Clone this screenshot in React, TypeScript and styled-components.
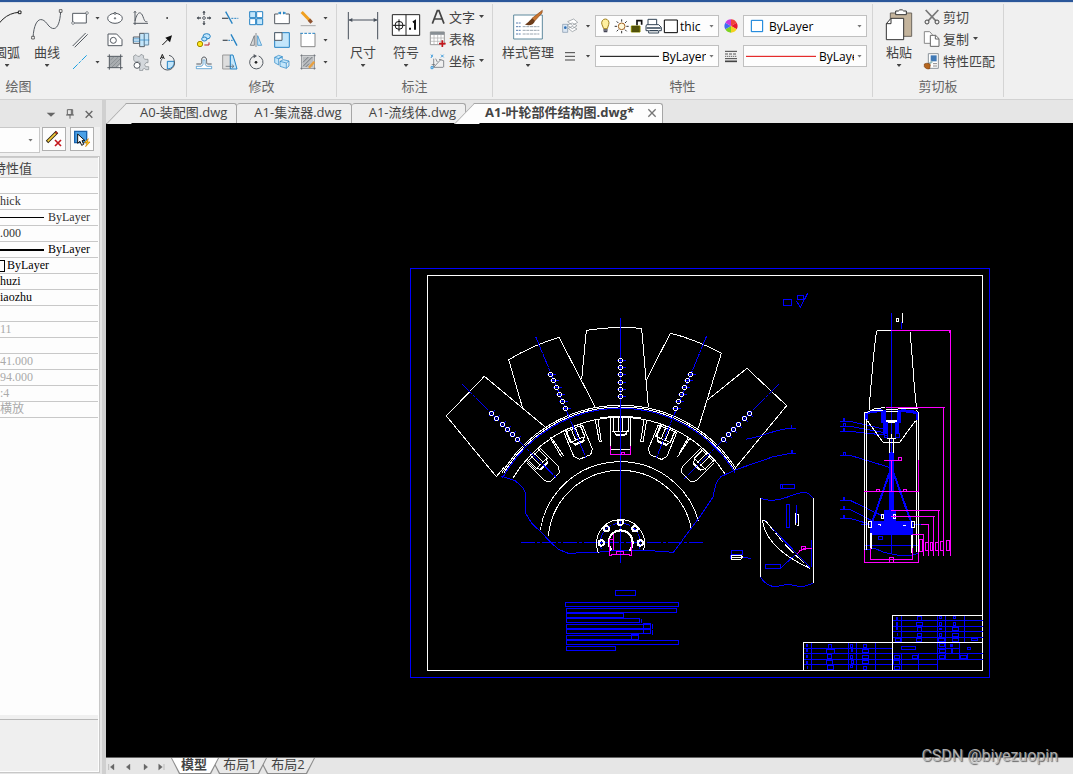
import React, { ReactNode } from "react";
import styled, { createGlobalStyle, css } from "styled-components";

const ui = `"Open Sans", "Noto Sans CJK SC", sans-serif`;

const GlobalStyle = createGlobalStyle`
  * { box-sizing: border-box; }
  html, body, #root { margin: 0; height: 100%; }
  body { font-family: ${ui}; font-size: 13px; color: #444; background: #e6e6e6; overflow: hidden; }
  button, select { font: inherit; color: inherit; }
`;

/* ---------- shell ---------- */
const Shell = styled.div`
  display: flex;
  flex-direction: column;
  height: 100vh;
`;
const Ribbon = styled.header`
  display: flex;
  flex: none;
  overflow: hidden;
  height: 100px;
  padding: 2px 0;
  background: #f0f0f0;
  border-top: 2px solid #2b579a;
  border-bottom: 1px solid #d2d2d2;
  box-shadow: inset 0 1px #d9dee6;
`;
const Body = styled.div`
  display: flex;
  flex: 1;
  min-height: 0;
`;

/* ---------- ribbon parts ---------- */
const Group = styled.section<{ $w: number; $end?: boolean }>`
  display: flex;
  flex-direction: column;
  flex: none;
  width: ${(p) => p.$w}px;
  margin-left: ${(p) => (p.$end ? -149 : 0)}px;
  border-right: 1px solid #d4d4d4;
`;
const Tools = styled.div<{ $end?: boolean }>`
  display: flex;
  height: 72px;
  padding: 2px 6px 0 4px;
  justify-content: ${(p) => (p.$end ? "flex-end" : "flex-start")};
`;
const GroupName = styled.h2`
  margin: 0;
  font-size: 13px;
  font-weight: 400;
  line-height: 20px;
  text-align: center;
  color: #666;
`;
const plain = css`
  padding: 0;
  border: 0;
  background: none;
`;
const BigButton = styled.button<{ $w: number }>`
  ${plain}
  display: flex;
  flex-direction: column;
  flex: none;
  align-items: center;
  width: ${(p) => p.$w}px;
  line-height: 16px;
  white-space: nowrap;
`;
const BigIcon = styled.span`
  display: grid;
  place-items: center;
  height: 38px;
`;
const IconGrid = styled.div<{ $cols: number }>`
  display: grid;
  grid-template-columns: repeat(${(p) => p.$cols}, 26px);
  grid-auto-rows: 22px;
  padding-top: 1px;
`;
const ArrowColumn = styled.div`
  display: grid;
  width: 9px;
  grid-auto-rows: 22px;
  padding-top: 1px;
`;
const IconButton = styled.button`
  ${plain}
  display: grid;
  place-items: center;
`;
const RowList = styled.div`
  display: grid;
  grid-auto-rows: 22px;
  padding-left: 2px;
`;
const RowButton = styled.button`
  ${plain}
  display: flex;
  align-items: center;
  gap: 2px;
  padding-bottom: 1px;
  line-height: 18px;
  white-space: nowrap;
`;
const Arrow = styled.i<{ $color?: string }>`
  display: block;
  width: 5px;
  height: 3px;
  margin: 2px;
  background: ${(p) => p.$color ?? "#444"};
  clip-path: polygon(0 0, 100% 0, 50% 100%);
`;
const MenuArrow = styled(Arrow)`
  margin-top: 4px;
`;
const PropertyGrid = styled.div`
  display: grid;
  grid-template-columns: 22px 14px 124px 24px 124px;
  grid-auto-rows: 22px;
  row-gap: 8px;
  align-items: center;
  justify-items: center;
  padding-top: 9px;
`;
const Combo = styled.label`
  position: relative;
  display: block;
  width: 100%;
  height: 22px;
`;
const ComboSelect = styled.select<{ $indent: number }>`
  appearance: none;
  width: 100%;
  height: 100%;
  padding: 0 12px 0 ${(p) => p.$indent}px;
  border: 1px solid #c0c0c0;
  border-radius: 0;
  background: #fdfdfd;
  color: #000;
  font-size: 12px;
`;
const ComboArt = styled.span`
  position: absolute;
  inset: 0;
  display: flex;
  align-items: center;
  justify-content: space-between;
  padding: 0 3px;
  pointer-events: none;
`;

/* ---------- property palette ---------- */
const Palette = styled.aside`
  display: flex;
  flex-direction: column;
  flex: none;
  width: 106px;
  padding: 0 2px 1px 0;
  background: #e6e6e6;
  border-right: 4px solid #d0d0d0;
`;
const PaletteBar = styled.div`
  display: flex;
  justify-content: flex-end;
  align-items: center;
  gap: 7px;
  height: 27px;
  padding-right: 5px;
`;
const PaletteTools = styled.div`
  display: flex;
  gap: 4px;
  height: 29px;
  padding-right: 6px;
  background: #f0f0f0;
`;
const ObjectSelect = styled.div`
  flex: 1;
  display: flex;
  align-items: center;
  justify-content: flex-end;
  height: 26px;
  padding-right: 4px;
  margin-right: -2px;
  border: solid #c8c8c8;
  border-width: 1px 1px 1px 0;
  background: #fdfdfd;
`;
const FramedButton = styled.button`
  display: grid;
  place-items: center;
  width: 24px;
  height: 24px;
  padding: 0;
  border: 1px solid #b0b0b0;
  background: #fdfdfd;
`;
const Sheet = styled.div`
  display: flex;
  flex-direction: column;
  flex: 1;
  border: solid #c8c8c8;
  border-width: 1px 1px 1px 0;
  background: #fdfdfd;
`;
const ValueTable = styled.table`
  width: 98px;
  border-collapse: collapse;
  table-layout: fixed;
  font-family: "Liberation Serif", "Noto Sans CJK SC", serif;
  font-size: 12px;
`;
const HeadCell = styled.th`
  height: 20px;
  padding: 0;
  border: solid #ccc;
  border-width: 1px 0;
  background: #f0f0f0;
  font-family: ${ui};
  font-size: 13px;
  font-weight: 400;
  line-height: 18px;
  text-align: left;
  text-indent: -7px;
`;
const ValueCell = styled.td<{ $tone?: "dark" | "pale" }>`
  height: 16px;
  padding: 0;
  border-bottom: 1px solid #c8c8c8;
  line-height: 15px;
  white-space: nowrap;
  color: ${(p) => (p.$tone === "dark" ? "#000" : p.$tone === "pale" ? "#aaa" : "#333")};
`;
const CellLine = styled.span`
  display: flex;
  align-items: center;
  height: 15px;
`;
const Rule = styled.i<{ $weight: number }>`
  width: 44px;
  height: ${(p) => p.$weight}px;
  margin-right: 4px;
  background: #000;
`;
const Swatch = styled.i`
  width: 5px;
  height: 12px;
  margin-right: 2px;
  border: 1px solid #000;
  border-left: 0;
`;
const HelpBox = styled.div`
  height: 56px;
  margin: auto 1px 1px 0;
  border-top: 4px solid #f0f0f0;
  background: #efefef;
  box-shadow: inset 0 1px #b8b8b8;
`;

/* ---------- document area ---------- */
const Workspace = styled.main`
  position: relative;
  display: flex;
  flex-direction: column;
  flex: 1;
  min-width: 0;
`;
const FileTabs = styled.nav`
  display: flex;
  flex: none;
  height: 23px;
  padding-top: 3px;
  background: #e6e6e6;
`;
const FileTab = styled.button<{ $slant?: boolean; $active?: boolean }>`
  position: relative;
  z-index: 0;
  height: 20px;
  padding: 0 ${(p) => (p.$active ? 6 : 10)}px 2px ${(p) => (p.$active ? 31 : p.$slant ? 34 : 17)}px;
  margin-left: ${(p) => (p.$active ? -12 : 0)}px;
  border: 0;
  background: none;
  font-weight: ${(p) => (p.$active ? 700 : 400)};
  line-height: 16px;
  white-space: nowrap;
  &::before {
    content: "";
    position: absolute;
    z-index: -1;
    inset: 0 0 0 ${(p) => (p.$slant ? 19 : 0)}px;
    border: solid #a6a6a6;
    border-width: 1px 1px 0 0;
    border-radius: 3px 3px 0 0;
    background: ${(p) => (p.$active ? "#fdfdfd" : "#efefef")};
  }
  &::after {
    content: "";
    display: ${(p) => (p.$slant ? "block" : "none")};
    position: absolute;
    z-index: -1;
    left: 0;
    top: 0;
    width: 24px;
    height: 20px;
    border: solid #a6a6a6;
    border-width: 1px 0 0 1px;
    background: ${(p) => (p.$active ? "#fdfdfd" : "#efefef")};
    transform: skewX(-44deg);
    transform-origin: 0 100%;
  }
`;
const CloseMark = styled.span`
  display: inline-block;
  margin-left: 13px;
  vertical-align: -1px;
`;
const Canvas = styled.div`
  flex: 1;
  min-height: 0;
  background: #000;
`;
const Sketch = styled.svg`
  display: block;
  width: 100%;
  height: 100%;
  fill: none;
  shape-rendering: crispEdges;
  & * { vector-effect: non-scaling-stroke; }
`;
const LayoutBar = styled.nav`
  display: flex;
  flex: none;
  height: 17px;
  border-top: 1px solid #666;
  background: #e6e6e6;
`;
const Pager = styled.div`
  display: flex;
  gap: 4px;
  width: 73px;
`;
const LayoutTab = styled.button<{ $order: number; $active?: boolean }>`
  position: relative;
  z-index: ${(p) => 4 - p.$order};
  height: 16px;
  width: ${(p) => (p.$active ? 48 : 56)}px;
  margin-left: -8px;
  padding: ${(p) => (p.$active ? "0 2px 3px 0" : "0 0 3px 2px")};
  border: 0;
  background: #8c8c8c;
  clip-path: polygon(0 0, 100% 0, calc(100% - 8px) 100%, 8px 100%);
  font-weight: ${(p) => (p.$active ? 700 : 400)};
  line-height: 13px;
  &::before {
    content: "";
    position: absolute;
    z-index: -1;
    inset: 0 1px 1px;
    background: ${(p) => (p.$active ? "#fff" : "#e9e9e9")};
    clip-path: polygon(0 0, 100% 0, calc(100% - 8px) 100%, 8px 100%);
  }
`;
const Watermark = styled.span`
  position: absolute;
  z-index: 9;
  right: 15px;
  bottom: 8px;
  font: 16px/20px "Roboto", "Liberation Sans", sans-serif;
  color: rgba(190, 190, 190, 0.9);
  text-shadow: 1px 1px 1px #666;
`;

/* ---------- icons: every unit is a third of a pixel ---------- */
const IconSvg = styled.svg`
  display: block;
  flex: none;
  fill: none;
  stroke: #555b62;
  stroke-width: 3;
`;
const Icon = ({ w = 18, h = 18, children }: { w?: number; h?: number; children: ReactNode }) => (
  <IconSvg width={w} height={h} viewBox={`0 0 ${w * 3} ${h * 3}`} aria-hidden="true">
    {children}
  </IconSvg>
);

const blue = "#2583c4";
const sky = "#c3e6fb";

const drawTools: [string, ReactNode][] = [
  ["椭圆", <><ellipse cx="27" cy="28" rx="22" ry="15" fill="#fff" /><circle cx="27" cy="13" r="3" fill="#fff" /><circle cx="27" cy="28" r="2" /></>],
  ["函数曲线", <><path d="M9 7V48M4 43H48M9 36C16 6 27 6 33 23S40 38 46 38" /><path d="M5 12l4-6 4 6" strokeWidth="2" /></>],
  ["点", <path d="M25 27h5" stroke="#222" strokeWidth="5" />],
  ["孔", <><path d="M6 9H32L48 26V44H6z" fill="#fff" /><circle cx="22" cy="28" r="9" /></>],
  ["轴", <><path d="M4 18H23V37H4z" fill="#fff" /><path d="M23 7H37V47H23z" fill={sky} /><path d="M37 7H50V42H37z" fill={sky} stroke="#6b8da5" /><path d="M2 27h50M4 22h19M4 32h19" stroke={blue} strokeWidth="2" /></>],
  ["箭头", <><path d="M13 42L30 25" stroke="#111" /><path d="M42 13L36 34 22 20z" fill="#111" stroke="none" /></>],
  ["填充", <><path d="M10 10H44V34L34 44H10z" fill="#a9adb0" stroke="none" /><path d="M10 4V50M44 4V50M4 10H50M4 44H50" /><path d="M13 22L24 11M13 35L37 12M18 42L42 18M30 42L42 30" stroke="#7f858a" strokeWidth="2" /></>],
  ["齿轮", <><path d="M5 9l7-4 5 5h6l4-6 8 4-1 7 5 4h9v10h-6l-4 6 3 6h9v9h-9l-3-4-6 3v4h-9v-8l-4-6 6-4v-6l-5-4-10 2-5-6z" fill="#d4d8dc" stroke="#80868b" strokeWidth="2" /><circle cx="15" cy="37" r="9" fill="#fff" /></>],
  ["局部放大", <><path d="M28 25H49A21 21 0 0 1 28 48z" fill={sky} stroke={blue} /><path d="M18 12A21 21 0 1 0 49 25A21 21 0 0 0 33 7" /><path d="M7 18L13 4 19 18M9 13h8" stroke="#222" /></>],
];

const editTools: [string, ReactNode][] = [
  ["移动", <><path d="M27 6V18M27 36V48M6 27H18M36 27H48" strokeWidth="4" /><path d="M22 12l5-7 5 7zM22 42l5 7 5-7zM12 22l-7 5 7 5zM42 22l7 5-7 5z" fill="#555b62" stroke="none" /><circle cx="27" cy="27" r="4" fill="#fff" /></>],
  ["修剪", <><path d="M3 28H22" strokeWidth="4" /><path d="M31 28H52" stroke={blue} strokeDasharray="6 3" /><path d="M14 8L34 44" stroke={blue} strokeWidth="4" /></>],
  ["阵列", <><path d="M8 8H26V26H8zM29 29H47V47H29z" fill={sky} stroke={blue} /><path d="M29 8H47V26H29zM8 29H26V47H8z" fill="#fff" stroke={blue} /></>],
  ["打断", <><path d="M16 15H5V44H49V15H38" fill="#fff" /><path d="M22 8V16M32 8V16M16 12h6M32 12h6" stroke={blue} strokeWidth="4" /></>],
  ["删除", <><path d="M8 9L34 36" stroke="#f0a020" strokeWidth="9" /><path d="M30 32l8 9" stroke="#8e5230" strokeWidth="10" /><path d="M5 50H50" stroke="#888" strokeWidth="2" /></>],
  ["复制对象", <><circle cx="15" cy="39" r="8" fill="#ffe71a" stroke="#a08a00" /><ellipse cx="35" cy="16" rx="11" ry="8" fill={sky} stroke={blue} /><ellipse cx="28" cy="24" rx="8" ry="6" fill={sky} stroke={blue} /><path d="M28 42H42V34" stroke="#b8202a" /></>],
  ["延伸", <><path d="M5 28H20" strokeWidth="4" /><path d="M22 28H36" stroke={blue} strokeDasharray="5 3" /><path d="M30 10L48 44" stroke={blue} strokeWidth="4" /></>],
  ["镜像", <><path d="M22 14V43H10z" fill="#ddd" strokeWidth="2" /><path d="M32 14V43H44z" fill={sky} stroke={blue} strokeWidth="2" /><path d="M27 6V48" strokeWidth="2" /></>],
  ["缩放", <><path d="M5 5H49V49H5z" fill={sky} stroke={blue} /><path d="M5 5H27V28H5z" fill="#fff" /></>],
  ["拉伸区域", <><path d="M6 7V47H48V7" fill="#fff" stroke="#888" /><path d="M4 7H50" stroke={blue} strokeDasharray="8 4" /></>],
  ["偏移", <><path d="M4 33H17C24 31 15 12 27 12S32 31 37 33H50" /><path d="M4 47H50V40H37M4 47V40H18C30 37 20 20 27 20S25 37 37 40" stroke={blue} strokeWidth="2" fill="#fff" /></>],
  ["拉伸", <><path d="M5 6H28V48H5z" fill="#ddd" stroke="#999" /><path d="M28 6H36L48 48H28z" fill={sky} stroke={blue} /><path d="M14 40H38M32 34l7 6-7 6" strokeWidth="2" /></>],
  ["旋转", <><path d="M21 9A20 20 0 1 0 35 9" /><path d="M20 3L30 9 20 16z" fill="#555b62" stroke="none" /><circle cx="27" cy="28" r="4" fill="#222" stroke="none" /></>],
  ["分解", <><path d="M5 13l12-6 11 4-11 6zM5 13v16l12 7V17M17 17l11-6v8" fill={sky} stroke={blue} strokeWidth="2" /><path d="M21 25l10-5 17 4-8 6zM21 25v15l19 6V30M40 46l8-7V24" fill={sky} stroke={blue} strokeWidth="2" /></>],
  ["填充编辑", <><path d="M11 11H43V43H11z" fill="#b9bcbf" stroke="none" /><path d="M8 4V50M46 4V50M4 8H50M4 46H50M12 28L28 12M12 40L40 12M20 42L30 32" strokeWidth="2" /><path d="M30 44L46 26" stroke="#e8a040" strokeWidth="7" /></>],
];

const splineIcon = (
  <Icon w={32} h={32}>
    <path d="M6 86C10 26 32 22 48 44C68 72 86 60 89 8" />
    <path d="M2 82h8v8H2zM85 2h8v8h-8z" fill="#fff" stroke="#222" strokeWidth="2" />
  </Icon>
);
const arcIcon = (
  <Icon w={32} h={32}>
    <path d="M8 80C18 38 48 12 84 10" stroke="#222" />
    <path d="M82 6h8v8h-8zM4 78h8v8H4z" fill="#fff" stroke="#222" />
  </Icon>
);
const dimensionIcon = (
  <Icon w={32} h={30}>
    <path d="M4 6V88M92 6V88M6 30H90" stroke="#49515c" />
    <path d="M5 30l11-6v12zM91 30l-11-6v12z" fill="#49515c" stroke="none" />
  </Icon>
);
const symbolIcon = (
  <Icon w={30} h={26}>
    <path d="M4 8H86V70H4zM45 8V70" fill="#fff" stroke="#222" />
    <circle cx="24" cy="40" r="12" stroke="#111" />
    <path d="M6 40H43M24 22V58" stroke="#111" />
    <path d="M54 50h6M66 31l6-4V53" stroke="#111" strokeWidth="6" />
  </Icon>
);
const styleIcon = (
  <Icon w={32} h={32}>
    <path d="M5 18H91V90H5z" fill="#fff" stroke="#5f8a9e" />
    <path d="M12 42h14M12 53h14M12 64h14M12 75h14" stroke="#5b7fb0" strokeDasharray="6 2" />
    <path d="M32 53h50M32 64h50M32 75h50" stroke="#9aa6b0" strokeDasharray="9 2" />
    <path d="M91 4L60 28l8 8L90 12z" fill="#c9752f" stroke="#8d4c1c" strokeWidth="2" />
    <path d="M38 46c10-2 14-12 23-18l8 8c-4 12-18 16-31 10z" fill="#6d3d1a" stroke="none" />
  </Icon>
);
const pasteIcon = (
  <Icon w={28} h={32}>
    <path d="M16 12H80V82H16z" fill="#c4b49c" stroke="#6d675e" />
    <path d="M32 6h8c2-5 14-5 16 0h8v11H32z" fill="#fff" stroke="#333" />
    <path d="M4 44L18 28H56V92H4z" fill="#fff" stroke="#333" />
    <path d="M4 44H18V28" stroke="#333" />
  </Icon>
);

/* ---------- small composed pieces ---------- */
const Big = ({ label, icon, w = 42 }: { label: string; icon: ReactNode; w?: number }) => (
  <BigButton $w={w}>
    <BigIcon>{icon}</BigIcon>
    {label}
    <MenuArrow />
  </BigButton>
);
const Row = ({ label, icon, menu }: { label: string; icon: ReactNode; menu?: boolean }) => (
  <RowButton>
    {icon}
    <span>{label}</span>
    {menu && <Arrow />}
  </RowButton>
);
const ComboBox = ({ name, value, indent, art }: { name: string; value: string; indent: number; art: ReactNode }) => (
  <Combo>
    <ComboSelect aria-label={name} $indent={indent}>
      <option>{value}</option>
    </ComboSelect>
    <ComboArt>
      {art}
      <Arrow $color="#777" />
    </ComboArt>
  </Combo>
);

/* ---------- the drawing ---------- */
const W = "#fff";
const B = "#00f";
const M = "#f0f";

/* Places a detail view on the sheet; units inside are a third of a pixel. */
const Detail = ({ x, y, children }: { x: number; y: number; children: ReactNode }) => (
  <g transform={`translate(${x} ${y}) scale(${1 / 3})`}>{children}</g>
);
type Box = [number, number, number, number];
const Boxes = ({ items, color = B, fill = "none" }: { items: Box[]; color?: string; fill?: string }) => (
  <>
    {items.map(([x1, y1, x2, y2], i) => (
      <rect key={i} x={x1} y={y1} width={x2 - x1} height={y2 - y1} stroke={color} fill={fill} />
    ))}
  </>
);

const HUB = { x: 661, y: 848 };

/* Upper arc about the hub, from one abscissa to another. */
const arc = (r: number, x1: number, x2: number) => {
  const y = (x: number) => HUB.y - Math.sqrt(r * r - (x - HUB.x) ** 2);
  return `M${x1} ${y(x1)}A${r} ${r} 0 0 1 ${x2} ${y(x2)}`;
};

const Clamp = ({ angle }: { angle: number }) => (
  <g transform={`rotate(${angle} ${HUB.x} ${HUB.y})`} stroke={W}>
    <path d={angle ? "M631 478V556L643 570H680L691 556V478" : "M631 473V568H691V473"} />
    <path d="M640 473V510L648 526H674L685 510V473M655 473V514M668 473V514M637 513H686M646 520V526M678 520V526M635 473H688" />
    <path d="M645 524H678" />
    {angle !== 0 && <path d="M637 478V514M646 522H680M684 478V514M634 478H688" />}
  </g>
);

const holes: [number, number][] = [
  [274, 460], [290, 476], [306, 492], [321, 508], [337, 524], [353, 538],
  [451, 343], [460, 362], [469, 383], [478, 403], [487, 424], [496, 445],
];
const allHoles: [number, number][] = [
  ...holes,
  ...holes.map(([x, y]): [number, number] => [1322 - x, y]),
  ...[301, 322, 344, 367, 388, 409].map((y): [number, number] => [661, y]),
];
const onGrid = (v: number) => Math.floor(v / 3) * 3 + 1.5;

const Impeller = () => (
  <Detail x={400} y={260}>
    <g stroke={W}>
      <path d="M545 358L559 211Q610 203 661 202Q700 202 725 206L745 440" />
      <path d="M368 445L326 299Q400 255 477 232L585 440" />
      <path d="M437 502L253 349L139 468L289 650L312 622" />
      <path d="M740 358L811 220Q880 235 964 280L895 505" />
      <path d="M925 418L1041 325L1160 437L1005 625" />
      <path d={arc(412, 306, 1010)} />
      <path d={arc(407, 312, 1004)} />
      <path d={arc(376, 338, 976)} />
      <path d={arc(379, 600, 722)} />
      <path d={arc(243, 421, 895)} />
      <path d={arc(217, 445, 874)} />
      <path d="M586 480L598 545H604L594 480M740 480L729 545H722L732 480M450 532L485 592M457 537L491 588M870 534L832 592M864 534L838 580" />
      {[-45, -22.5, 0, 22.5, 45].map((a) => <Clamp key={a} angle={a} />)}
    </g>
    <g stroke={B}>
      <path d={arc(403, 308, 1006)} />
      <path d="M661 175V910" />
      <path d="M187 373L470 655M407 230L560 598M920 228L767 598M1136 373L853 656" strokeDasharray="14 1 3 1" />
      <path d="M363 847H910" strokeDasharray="14 2 3 2" />
      <path d="M302 648L345 662Q378 685 378 710L377 760L395 790L425 818L450 845L475 868L505 880L600 876L661 870L765 873L820 877L855 830L900 770L940 710Q945 665 963 650L1005 630L1120 590L1170 580H1188" />
      <path d="M1038 538L1080 528L1130 512L1165 505H1188M1174 496V505" />
      <path d="M1173 571h5v8h-5z" fill={B} />
    </g>
    {allHoles.map(([x, y]) => (
      <g key={`${x}-${y}`} transform={`translate(${onGrid(x)} ${onGrid(y)})`}>
        <path d="M-12 0H15" stroke={B} transform={x < 400 ? "rotate(-45)" : x > 930 ? "rotate(45)" : undefined} />
        <path d="M-3 -6H3L6 -3V3L3 6H-3L-6 3V-3z" stroke={W} />
      </g>
    ))}
    {/* hub */}
    <path d="M595 878A72 72 0 1 1 731 870" stroke={W} />
    <path d="M604 868A60 60 0 1 1 718 868" stroke={B} strokeDasharray="8 2" />
    <path d="M634 870A36 36 0 1 1 688 872" stroke={W} strokeWidth="2" />
    {[[661, 787], [619, 806], [705, 806], [604, 849], [721, 849]].map(([x, y]) => (
      <circle key={x} cx={x} cy={y} r="8" stroke={W} strokeWidth="2" />
    ))}
    <path d="M641 822V870M627 838V886H633V883H688V886H695V847M627 838H641M649 882V873H671V882M631 558V583H691V558M664 583V577H674V583" stroke={M} />
  </Detail>
);

const BladeSection = () => (
  <Detail x={680} y={280}>
    <g stroke={B}>
      <path d="M310 58H335V76H310zM352 46H371V58H352zM349 62L361 82L383 40" />
      <path d="M302 613H344V625H302zM308 613V625" />
      <path d="M241 655Q280 668 320 652T375 637Q390 640 401 657M241 890Q255 915 285 921Q310 915 325 912Q350 922 375 918Q395 912 401 908" />
      <path d="M319 673H329V742H319zM349 675V730M255 722L390 862M394 780V862M256 853H302V865H256zM302 864L345 825" />
      <path d="M154 811H188V823H154zM152 826V838M188 832L213 835" />
    </g>
    <g stroke={W}>
      <path d="M241 655V890M401 655V908M346 700V735M352 703H356V735H350" />
      <path d="M390 865Q345 845 310 818Q255 775 247 720L258 724" />
      <path d="M258 724L316 795L385 862" strokeDasharray="12 3" />
      <path d="M154 826H182L188 832L182 838H154zM154 832H186" />
    </g>
    <path d="M396 805H375L360 812L351 822M364 800H376V808H364z" stroke={M} />
  </Detail>
);

const leaders: [number, string, boolean][] = [
  [364, "L160 387", true], [379, "L165 398", false], [394, "L170 406", true], [466, "L178 502", false],
  [601, "L158 648", true], [628, "L125 662", true], [655, "L118 672", true],
];

const SideView = () => (
  <Detail x={830} y={300}>
    <g stroke={B}>
      <path d="M184 40V762M214 66V88M105 736H265" />
      <path d="M112 337L155 331M213 331L258 337" strokeWidth="3" />
      <Boxes fill={B} items={[[103, 337, 111, 358], [154, 331, 166, 366], [161, 366, 172, 400], [203, 331, 212, 366], [197, 366, 206, 400], [259, 337, 266, 358], [179, 457, 190, 632], [162, 631, 196, 664], [121, 665, 248, 703]]} />
      <Boxes items={[[162, 400, 173, 412], [197, 400, 207, 412], [146, 710, 158, 719]]} />
      <path d="M178 520L127 665M191 520L243 665" strokeWidth="2" />
      <path d="M103 750L133 745L165 758L200 765L245 766L265 760M94 673H121M250 673H275" />
      {leaders.map(([y, end, solid]) => (
        <g key={y}>
          <path d={`M30 ${y}H60${end}`} />
          <rect x="40" y={y - 9} width={solid ? 4 : 6} height="9" fill={solid ? B : "none"} />
        </g>
      ))}
    </g>
    <g stroke={W}>
      <path d="M217 40V68M199 55H206V65H199z" />
      <path d="M120 331L118 315L124 245L130 175L139 95L145 91H184M240 95L247 175L252 245L258 310L263 328" />
      <path d="M120 330H160M103 340V337H112L133 326L165 323M205 326H263M258 331L266 338V360M168 328H203M168 335H205" />
      <path d="M103 337V750M109 358V750M259 360V757M265 360V757" />
      <path d="M112 362L160 428H208L257 362M178 415V460M190 415V460M172 415H197M184 402V418" />
      <path d="M168 363H200M174 366H196" strokeWidth="2" />
      <path d="M123 700V747M246 706V760" strokeWidth="2" />
      <path d="M116 664H124V683H116zM245 664H254V683H245zM155 642H161V655H155zM190 642H197V655H190zM144 673H150L152 678M218 675H228" />
    </g>
    <g stroke={M}>
      <path d="M184 91H362V768M358 91V100M168 322H345M341 322V768M162 481H215M205 481V472H215V481M184 481V574M103 574H265V480M139 574V568H149V574M220 574V568H230V574" />
      <path d="M103 750V787H265V757M121 745V778H248V745M178 772H190V787M178 772V787M184 631H329M325 631V768M184 649H315M310 649V768M273 673H297M295 675V768M245 703H281V768" />
      <Boxes color={M} items={[[267, 718, 278, 754], [286, 727, 294, 751], [301, 727, 308, 751], [316, 727, 325, 751], [331, 724, 339, 751], [349, 721, 359, 751]]} />
    </g>
  </Detail>
);

const Notes = () => (
  <Detail x={500} y={400}>
    <Boxes items={[[346, 571, 407, 586], [196, 607, 536, 619], [199, 625, 530, 638], [199, 640, 371, 653], [199, 655, 419, 668], [199, 673, 452, 686], [199, 688, 452, 700], [199, 706, 416, 718], [199, 721, 536, 733], [199, 739, 347, 751], [430, 670, 452, 700], [394, 703, 416, 718]]} />
    <path d="M424 657V670M458 672V687M458 690V705" stroke={B} />
  </Detail>
);

const TitleBlock = () => (
  <Detail x={780} y={600}>
    <path
      stroke={B}
      d="M337 61H608M337 79H608M337 94H608M337 112H608M70 145H337M472 145H538M70 160H608M70 178H608M70 193H472M364 46V127M472 46V211M496 46V178M553 46V127M94 127V211M205 127V211M229 127V211M286 127V211M364 160V211M415 160V211M538 127V178M562 160V178"
    />
    <Boxes items={[[412, 49, 425, 60], [409, 67, 428, 75], [412, 82, 425, 93], [412, 100, 425, 108], [409, 115, 425, 125], [346, 115, 362, 125], [478, 49, 485, 56], [478, 67, 485, 75], [478, 100, 485, 108], [475, 115, 494, 125], [520, 49, 527, 56], [520, 67, 527, 75], [517, 82, 536, 90], [517, 100, 536, 108], [517, 115, 536, 125], [574, 115, 591, 122], [364, 139, 405, 149], [478, 129, 494, 140], [478, 148, 496, 156], [562, 142, 572, 149], [343, 166, 359, 174], [397, 166, 411, 174], [478, 166, 494, 174], [541, 166, 560, 174], [341, 181, 359, 192], [343, 199, 359, 207], [145, 133, 155, 144], [139, 148, 164, 159], [142, 163, 155, 174], [139, 181, 158, 192], [142, 195, 161, 207], [211, 133, 218, 141], [211, 166, 218, 174], [214, 181, 221, 189], [211, 195, 218, 203], [250, 133, 260, 141], [247, 148, 266, 156], [247, 166, 266, 174], [247, 181, 266, 189], [250, 199, 260, 207]]} />
    <Boxes fill={B} items={[[349, 52, 353, 60], [349, 67, 353, 75], [349, 82, 353, 89], [351, 100, 353, 107], [479, 85, 485, 89], [79, 133, 83, 140], [79, 148, 83, 155], [79, 166, 83, 173], [79, 183, 83, 190], [82, 199, 83, 206], [214, 148, 218, 155], [512, 133, 518, 140], [514, 148, 518, 156]]} />
    <path d="M337 211V46H608M70 211V127H608" stroke={W} />
  </Detail>
);

const Drawing = () => (
  <Sketch viewBox="106 123 967 634" preserveAspectRatio="xMidYMid meet" role="img" aria-label="叶轮部件结构图">
    <path d="M410.5 268.5H989.5V677.5H410.5z" stroke={B} />
    <path d="M427.5 275.5H982.5V670.5H427.5z" stroke={W} />
    <Impeller />
    <BladeSection />
    <SideView />
    <Notes />
    <TitleBlock />
  </Sketch>
);

/* ---------- page ---------- */
const RibbonBar = () => (
  <Ribbon>
    <Group $w={336} $end>
      <Tools $end>
        <Big w={40} label="圆弧" icon={arcIcon} />
        <Big w={40} label="曲线" icon={splineIcon} />
        <IconGrid $cols={1}>
          <IconButton aria-label="矩形"><Icon><path d="M5 13H46V42H5z" fill="#fff" /><circle cx="48" cy="12" r="4" fill="#fff" strokeWidth="2" /><circle cx="6" cy="42" r="4" fill="#fff" strokeWidth="2" /></Icon></IconButton>
          <IconButton aria-label="平行线"><Icon><path d="M5 45L44 6M11 49L50 10" /></Icon></IconButton>
          <IconButton aria-label="中心线"><Icon><path d="M6 48L20 34M23 31L29 25M32 22L47 7" stroke="#1ba1e2" /></Icon></IconButton>
        </IconGrid>
        <ArrowColumn>
          <IconButton aria-label="更多形状"><Arrow /></IconButton>
          <span />
          <IconButton aria-label="更多线型"><Arrow /></IconButton>
        </ArrowColumn>
        <IconGrid $cols={3}>
          {drawTools.map(([name, art]) => <IconButton key={name} aria-label={name}><Icon>{art}</Icon></IconButton>)}
        </IconGrid>
      </Tools>
      <GroupName>绘图</GroupName>
    </Group>

    <Group $w={150}>
      <Tools>
        <IconGrid $cols={5}>
          {editTools.map(([name, art]) => <IconButton key={name} aria-label={name}><Icon>{art}</Icon></IconButton>)}
        </IconGrid>
        <ArrowColumn>
          <IconButton aria-label="删除选项"><Arrow /></IconButton>
          <IconButton aria-label="区域选项"><Arrow /></IconButton>
          <IconButton aria-label="填充选项"><Arrow /></IconButton>
        </ArrowColumn>
      </Tools>
      <GroupName>修改</GroupName>
    </Group>

    <Group $w={156}>
      <Tools>
        <Big w={44} label="尺寸" icon={dimensionIcon} />
        <Big w={42} label="符号" icon={symbolIcon} />
        <RowList>
          <Row menu label="文字" icon={<Icon><path d="M10 47L25 8H30L45 47M15 33H40" stroke="#444" strokeWidth="5" /></Icon>} />
          <Row label="表格" icon={<Icon><path d="M4 6H46V44H4z" fill="#fff" stroke="#999" /><path d="M4 10H46" strokeWidth="9" stroke="#888f94" /><path d="M4 24H46M4 34H46M15 15V44M26 15V44M36 15V44" stroke="#aaa" strokeWidth="2" /><path d="M40 31V51M30 41H50" stroke="#c4161c" strokeWidth="5" /></Icon>} />
          <Row menu label="坐标" icon={<Icon><path d="M14 20V46H42M14 46L36 22M20 20l5 10M30 22l14 4V46M8 38h10" strokeWidth="2" /><path d="M6 8l5 6M11 8l-5 10M36 8l8 8M44 8l-8 8M6 44h6v6H6z" stroke="#3d9bdc" /></Icon>} />
        </RowList>
      </Tools>
      <GroupName>标注</GroupName>
    </Group>

    <Group $w={380}>
      <Tools>
        <Big w={62} label="样式管理" icon={styleIcon} />
        <PropertyGrid>
          <IconButton aria-label="图层特性">
            <Icon><path d="M20 14l18-8 12 10-16 9zM18 24l16-6 14 8-14 9zM22 34l12-6 14 8-14 8z" fill="#fff" stroke="#858c92" strokeWidth="2" /><path d="M5 22H20V46H5z" fill="#dbe7f3" stroke="#7d93a8" strokeWidth="2" /><circle cx="13" cy="32" r="4" fill="#2e6fb5" stroke="none" /></Icon>
          </IconButton>
          <Arrow />
          <ComboBox name="图层" value="thic" indent={84} art={
            <Icon w={80} h={20}>
              <path d="M12 26a11 12 0 1 1 20 0l-4 12H17z" fill="#ffef9f" stroke="#a08020" /><path d="M16 42h13M17 47h11" stroke="#445" strokeWidth="4" />
              <circle cx="71" cy="31" r="10" fill="#fff8d8" stroke="#a06020" /><path d="M71 10v7M71 45v7M50 31h7M85 31h7M56 16l5 5M81 41l5 5M86 16l-5 5M61 41l-5 5" stroke="#333" />
              <path d="M100 30h26v18h-26z" fill="#111" stroke="#8a8a00" /><path d="M101 36h24M101 42h24" stroke="#d4d400" strokeWidth="2" /><path d="M117 28V14h14v12" stroke="#111" strokeWidth="5" />
              <path d="M150 26V10h26v16M146 26h36l8 8v10h-8v7h-30v-7h-8V30z" fill="#fff" stroke="#334455" strokeWidth="3" /><path d="M146 36h42M154 44h26" stroke="#334455" strokeWidth="4" />
              <path d="M199 12h39v38h-39z" fill="#fff" stroke="#000" />
            </Icon>
          } />
          <IconButton aria-label="颜色轮">
            <Icon w={16} h={16}>
              <g stroke="none">
                <path d="M24 24V4A20 20 0 0 1 41 14z" fill="#f0453a" /><path d="M24 24L41 14A20 20 0 0 1 41 34z" fill="#e8192c" /><path d="M24 24L41 34A20 20 0 0 1 24 44z" fill="#f4d21e" /><path d="M24 24V44A20 20 0 0 1 7 34z" fill="#7ed321" /><path d="M24 24L7 34A20 20 0 0 1 7 14z" fill="#3f6df0" /><path d="M24 24L7 14A20 20 0 0 1 24 4z" fill="#c43be0" />
              </g>
            </Icon>
          </IconButton>
          <ComboBox name="颜色" value="ByLayer" indent={25} art={<Icon w={20} h={16}><path d="M16 7h34v34H16z" fill="#fff" stroke="#0078d7" /></Icon>} />

          <IconButton aria-label="线型列表"><Icon><path d="M12 17H42M12 28H42M12 39H42" stroke="#444" /></Icon></IconButton>
          <Arrow />
          <ComboBox name="线型" value="ByLayer" indent={66} art={<Icon w={61} h={3}><path d="M6 4H183" stroke="#000" /></Icon>} />
          <IconButton aria-label="线宽列表"><Icon><path d="M9 13H45M9 35H45" strokeWidth="3" stroke="#444" /><path d="M9 21H45" stroke="#555" strokeDasharray="9 3" /><path d="M9 28H45" stroke="#666" strokeDasharray="4 2" /><path d="M9 43H45" stroke="#444" strokeWidth="5" /></Icon></IconButton>
          <ComboBox name="线宽" value="ByLayer" indent={75} art={<Icon w={70} h={3}><path d="M0 4H210" stroke="#e00000" /></Icon>} />
        </PropertyGrid>
      </Tools>
      <GroupName>特性</GroupName>
    </Group>

    <Group $w={131}>
      <Tools>
        <Big w={44} label="粘贴" icon={pasteIcon} />
        <RowList>
          <Row label="剪切" icon={<Icon><path d="M8 6L40 40M46 6L14 40" stroke="#777" strokeWidth="5" /><circle cx="12" cy="42" r="6" stroke="#444" fill="#eee" /><circle cx="42" cy="42" r="6" stroke="#444" fill="#eee" /></Icon>} />
          <Row menu label="复制" icon={<Icon><path d="M4 5H20L28 14V40H4z" fill="#fff" stroke="#888" /><path d="M22 16H38L48 26V49H22z" fill="#fff" stroke="#666" /><path d="M37 16V27H48" stroke="#666" /></Icon>} />
          <Row label="特性匹配" icon={<Icon><path d="M16 5H46V49H16z" fill="#fff" stroke="#8a9299" /><path d="M23 10H41V28H23z" fill="#3f78b5" stroke="none" /><path d="M30 35h12M30 42h12" stroke="#888" /><path d="M18 36l10-8" stroke="#9bb" strokeWidth="6" /><path d="M4 36c8-4 14-2 18 2l-2 12c-6 2-12 0-16-6z" fill="#b5651d" stroke="#7a3f10" strokeWidth="2" /></Icon>} />
        </RowList>
      </Tools>
      <GroupName>剪切板</GroupName>
    </Group>
  </Ribbon>
);

const values: { content: ReactNode; tone?: "dark" | "pale" }[] = [
  { content: "" },
  { content: "hick" },
  { content: <CellLine><Rule $weight={1} />ByLayer</CellLine> },
  { content: ".000" },
  { content: <CellLine><Rule $weight={2} />ByLayer</CellLine>, tone: "dark" },
  { content: <CellLine><Swatch />ByLayer</CellLine>, tone: "dark" },
  { content: "huzi", tone: "dark" },
  { content: "iaozhu", tone: "dark" },
  { content: "" },
  { content: "11", tone: "pale" },
  { content: "" },
  { content: "41.000", tone: "pale" },
  { content: "94.000", tone: "pale" },
  { content: ":4", tone: "pale" },
  { content: "横放", tone: "pale" },
];

const PropertyPalette = () => (
  <Palette>
    <PaletteBar>
      <IconButton aria-label="菜单"><Icon w={12} h={12}><path d="M5 14H31L18 26z" fill="#666" stroke="none" /></Icon></IconButton>
      <IconButton aria-label="固定"><Icon w={12} h={12}><path d="M10 5H26V20H10zM6 21H30M18 21V32M22 5V20" stroke="#666" /></Icon></IconButton>
      <IconButton aria-label="关闭"><Icon w={12} h={12}><path d="M8 9L28 29M28 9L8 29" stroke="#666" strokeWidth="4" /></Icon></IconButton>
    </PaletteBar>
    <PaletteTools>
      <ObjectSelect><Arrow $color="#777" /></ObjectSelect>
      <FramedButton aria-label="清除选择">
        <Icon><path d="M6 36L36 6" stroke="#2a2110" strokeWidth="10" /><path d="M8 34L32 10" stroke="#f7cf3d" strokeWidth="5" /><path d="M32 10l4-4" stroke="#c03020" strokeWidth="6" /><path d="M30 30L48 48M48 30L30 48" stroke="#c4161c" strokeWidth="5" /></Icon>
      </FramedButton>
      <FramedButton aria-label="快速选择">
        <Icon><path d="M5 4H41V38H5z" fill="#4aa0e6" stroke="#1a62ac" strokeWidth="4" /><path d="M14 12V40L21 34L26 46L32 43L27 32H36z" fill="#fff" stroke="#111" /><path d="M46 26L34 38H42L38 50L51 36H43z" fill="#ffd21e" stroke="#d07a00" strokeWidth="2" /></Icon>
      </FramedButton>
    </PaletteTools>
    <Sheet>
      <ValueTable>
        <thead><tr><HeadCell scope="col">特性值</HeadCell></tr></thead>
        <tbody>
          {values.map((v, i) => (
            <tr key={i}><ValueCell $tone={v.tone}>{v.content}</ValueCell></tr>
          ))}
        </tbody>
      </ValueTable>
      <HelpBox />
    </Sheet>
  </Palette>
);

const pagerArt = ["M8 15V33M24 15L13 24L24 33z", "M24 15L13 24L24 33z", "M18 15L29 24L18 33z", "M14 15L25 24L14 33zM30 15V33"];
const pagerNames = ["第一个", "上一个", "下一个", "最后一个"];

export default function App() {
  return (
    <>
      <GlobalStyle />
      <Shell>
        <RibbonBar />
        <Body>
          <PropertyPalette />
          <Workspace>
            <FileTabs>
              <FileTab $slant>A0-装配图.dwg</FileTab>
              <FileTab>A1-集流器.dwg</FileTab>
              <FileTab>A1-流线体.dwg</FileTab>
              <FileTab $slant $active>
                A1-叶轮部件结构图.dwg*
                <CloseMark><Icon w={10} h={10}><path d="M4 4L26 26M26 4L4 26" stroke="#777" strokeWidth="4" /></Icon></CloseMark>
              </FileTab>
            </FileTabs>
            <Canvas><Drawing /></Canvas>
            <LayoutBar>
              <Pager>
                {pagerArt.map((d, i) => (
                  <IconButton key={d} aria-label={pagerNames[i]}>
                    <Icon w={12} h={14}><path d={d} fill="#666" stroke="#666" strokeWidth="1" /></Icon>
                  </IconButton>
                ))}
              </Pager>
              <LayoutTab $order={0} $active>模型</LayoutTab>
              <LayoutTab $order={1}>布局1</LayoutTab>
              <LayoutTab $order={2}>布局2</LayoutTab>
            </LayoutBar>
            <Watermark>CSDN @biyezuopin</Watermark>
          </Workspace>
        </Body>
      </Shell>
    </>
  );
}
